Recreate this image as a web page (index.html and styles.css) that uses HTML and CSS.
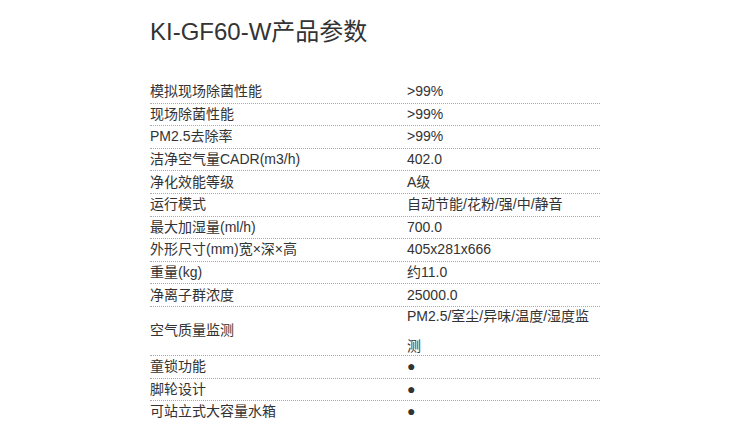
FILE: index.html
```html
<!DOCTYPE html>
<html>
<head>
<meta charset="utf-8">
<link rel="stylesheet" href="styles.css">
</head>
<body>
<div class="wrap">
  <h1 class="title">KI-GF60-W产品参数</h1>
  <div class="specs">
    <div class="row"><div class="k">模拟现场除菌性能</div><div class="v">&gt;99%</div></div>
    <div class="row"><div class="k">现场除菌性能</div><div class="v">&gt;99%</div></div>
    <div class="row"><div class="k">PM2.5去除率</div><div class="v">&gt;99%</div></div>
    <div class="row"><div class="k">洁净空气量CADR(m3/h)</div><div class="v">402.0</div></div>
    <div class="row"><div class="k">净化效能等级</div><div class="v">A级</div></div>
    <div class="row"><div class="k">运行模式</div><div class="v">自动节能/花粉/强/中/静音</div></div>
    <div class="row"><div class="k">最大加湿量(ml/h)</div><div class="v">700.0</div></div>
    <div class="row"><div class="k">外形尺寸(mm)宽×深×高</div><div class="v">405x281x666</div></div>
    <div class="row"><div class="k">重量(kg)</div><div class="v">约11.0</div></div>
    <div class="row"><div class="k">净离子群浓度</div><div class="v">25000.0</div></div>
    <div class="row tallrow"><div class="k">空气质量监测</div><div class="v tall">PM2.5/室尘/异味/温度/湿度监测</div></div>
    <div class="row"><div class="k">童锁功能</div><div class="v">●</div></div>
    <div class="row"><div class="k">脚轮设计</div><div class="v">●</div></div>
    <div class="row last"><div class="k">可站立式大容量水箱</div><div class="v">●</div></div>
  </div>
</div>
</body>
</html>
```

FILE: styles.css
```css
html, body {
  margin: 0;
  padding: 0;
  background: #fff;
}
body {
  font-family: "Liberation Sans", Arial, "Noto Sans CJK SC", sans-serif;
  color: #333;
}
.wrap {
  width: 450px;
  margin-left: 150px;
  padding-top: 17px;
}
.title {
  margin: 0;
  font-size: 24px;
  font-weight: normal;
  line-height: 30px;
  color: #333;
}
.specs {
  margin-top: 34px;
  font-size: 14px;
}
.row {
  display: flex;
  align-items: center;
  border-bottom: 1px dotted #aaa;
  height: 21.6px;
}
.row.tallrow {
  height: 48px;
}
.row.last {
  border-bottom: none;
}
.k {
  width: 257px;
  flex: none;
  line-height: 21px;
}
.v {
  flex: 1;
  line-height: 21px;
}
.v.tall {
  line-height: 30px;
  width: 193px;
  flex: none;
}
```
